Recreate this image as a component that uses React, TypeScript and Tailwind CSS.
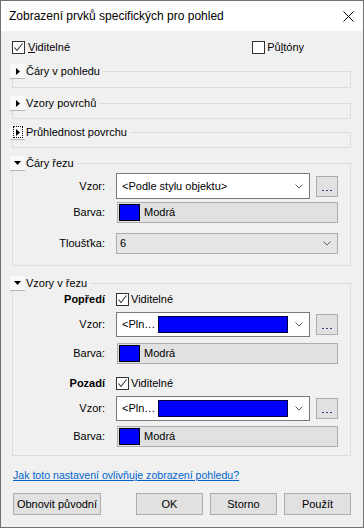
import React from "react";

const font = "font-['Liberation_Sans',Arial,sans-serif]";

function Check({ checked }: { checked?: boolean }) {
  return (
    <span className="flex h-[13px] w-[13px] shrink-0 items-center justify-center border border-[#333333] bg-white">
      {checked && (
        <svg width="11" height="11" viewBox="0 0 11 11">
          <polyline points="1.5,5.5 4,8.5 9.5,1.5" fill="none" stroke="#333333" strokeWidth="1.1" />
        </svg>
      )}
    </span>
  );
}

function Tri({ open }: { open?: boolean }) {
  return open ? (
    <svg width="7" height="4" viewBox="0 0 7 4">
      <polygon points="0,0 7,0 3.5,4" fill="#000" />
    </svg>
  ) : (
    <svg width="4" height="7" viewBox="0 0 4 7">
      <polygon points="0,0 4,3.5 0,7" fill="#000" />
    </svg>
  );
}

function Chevron() {
  return (
    <svg width="8" height="5" viewBox="0 0 8 5" className="shrink-0">
      <polyline points="0.5,0.5 4,4 7.5,0.5" fill="none" stroke="#606060" strokeWidth="1" />
    </svg>
  );
}

function Group({
  label,
  open,
  focused,
  className,
  boxClass,
  children,
}: {
  label: string;
  open?: boolean;
  focused?: boolean;
  className?: string;
  boxClass?: string;
  children?: React.ReactNode;
}) {
  return (
    <div className={`relative pt-[7px] ${className ?? ""}`}>
      <div className={`border border-[#dcdcdc] ${boxClass ?? "h-[17px]"}`}>{children}</div>
      {/* header sits over the top border like a legend */}
      <div className="absolute left-[-2px] top-0 flex h-[15px] items-center">
        <div className="flex h-[15px] w-[15px] items-center justify-center border-b border-[#b4b4b4] bg-[#f9f9f9]">
          <div
            className={`flex h-[12px] w-[10px] items-center justify-center ${
              focused ? "border border-dotted border-black" : ""
            }`}
          >
            <Tri open={open} />
          </div>
        </div>
        <span className="bg-[#f0f0f0] pl-[1px] pr-[3px] leading-[15px]">{label}</span>
      </div>
    </div>
  );
}

function Label({ children, bold }: { children: React.ReactNode; bold?: boolean }) {
  return (
    <span className={`w-[93px] shrink-0 pr-px text-right ${bold ? "font-bold" : ""}`}>{children}</span>
  );
}

function DotsButton() {
  return (
    <div className="ml-[6px] flex h-[21px] w-[22px] items-end justify-center border border-[#adadad] bg-[#e1e1e1] pb-[5px]">
      <span className="flex gap-[2px]">
        <span className="h-px w-[2px] bg-[#3a3a8a]" />
        <span className="h-px w-[2px] bg-[#3a3a8a]" />
        <span className="h-px w-[2px] bg-[#3a3a8a]" />
      </span>
    </div>
  );
}

function ColorField() {
  return (
    <div className="ml-[11px] flex h-[21px] w-[221px] items-center border border-[#adadad] bg-[#e1e1e1] pl-[1px]">
      <span className="h-[17px] w-[21px] border border-black bg-[#0000ff]" />
      <span className="pl-[4px]">Modrá</span>
    </div>
  );
}

function PatternCombo() {
  return (
    <div className="flex items-center">
      <div className="flex h-[25px] w-[194px] items-center border border-[#7a7a7a] bg-white pl-[5px] pr-[6px]">
        <span className="w-[36px]">&lt;Pln…</span>
        <span className="h-[17px] w-[130px] border border-[#000040] bg-[#0000ff]" />
        <span className="flex-1" />
        <Chevron />
      </div>
      <DotsButton />
    </div>
  );
}

export default function App() {
  return (
    <div className={`${font} flex h-[528px] w-[364px] flex-col border border-[#727272] text-[11px] text-black`}>
      {/* Title bar */}
      <div className="flex h-[30px] shrink-0 items-center justify-between bg-white pl-[8px] pr-[9px]">
        <span className="text-[12px]">Zobrazení prvků specifických pro pohled</span>
        <svg width="11" height="11" viewBox="0 0 11 11">
          <path d="M0.5 0.5 L10.5 10.5 M10.5 0.5 L0.5 10.5" stroke="#000" strokeWidth="1" />
        </svg>
      </div>

      <div className="flex flex-1 flex-col bg-[#f0f0f0] pl-[11px] pr-[12px]">
        {/* Top checkboxes */}
        <div className="mt-[10px] flex h-[13px] items-center">
          <Check checked />
          <span className="pl-[3px]">
            <span className="underline">V</span>iditelné
          </span>
          <span className="flex-1" />
          <Check />
          <span className="pl-[2px] pr-[47px]">
            Pů<span className="underline">l</span>tóny
          </span>
        </div>

        <Group label="Čáry v pohledu" className="mt-[10px]" />
        <Group label="Vzory povrchů" className="mt-[8px]" boxClass="h-[16px]" />
        <Group label="Průhlednost povrchu" focused className="mt-[6px]" boxClass="h-[16px]" />

        <Group label="Čáry řezu" open className="mt-[8px]" boxClass="h-[103px] pt-[9px]">
          <div className="flex items-center">
            <Label>Vzor:</Label>
            <div className="ml-[10px] flex items-center">
              <div className="flex h-[26px] w-[194px] items-center border border-[#7a7a7a] bg-white pl-[5px] pr-[6px]">
                <span className="flex-1">&lt;Podle stylu objektu&gt;</span>
                <Chevron />
              </div>
              <DotsButton />
            </div>
          </div>
          <div className="mt-[3px] flex items-center">
            <Label>Barva:</Label>
            <ColorField />
          </div>
          <div className="mt-[10px] flex items-center">
            <Label>Tloušťka:</Label>
            <div className="ml-[10px] flex h-[21px] w-[222px] items-center border border-[#adadad] bg-[#e5e5e5] pl-[3px] pr-[6px]">
              <span className="flex-1">6</span>
              <Chevron />
            </div>
          </div>
        </Group>

        <Group label="Vzory v řezu" open className="mt-[10px]" boxClass="h-[173px] pt-[9px]">
          <div className="flex h-[13px] items-center">
            <Label bold>Popředí</Label>
            <span className="ml-[10px]">
              <Check checked />
            </span>
            <span className="pl-[2px]">Viditelné</span>
          </div>
          <div className="mt-[6px] flex items-center">
            <Label>Vzor:</Label>
            <div className="ml-[10px]">
              <PatternCombo />
            </div>
          </div>
          <div className="mt-[6px] flex items-center">
            <Label>Barva:</Label>
            <ColorField />
          </div>
          <div className="mt-[13px] flex h-[13px] items-center">
            <Label bold>Pozadí</Label>
            <span className="ml-[10px]">
              <Check checked />
            </span>
            <span className="pl-[2px]">Viditelné</span>
          </div>
          <div className="mt-[6px] flex items-center">
            <Label>Vzor:</Label>
            <div className="ml-[10px]">
              <PatternCombo />
            </div>
          </div>
          <div className="mt-[5px] flex items-center">
            <Label>Barva:</Label>
            <ColorField />
          </div>
        </Group>

        <a className="mt-[12px] pl-px text-[10.6px] leading-[14px] text-[#0066cc] underline">
          Jak toto nastavení ovlivňuje zobrazení pohledu?
        </a>

        <div className="mt-[11px] flex items-center pl-[1px]">
          <button className="h-[22px] w-[88px] border border-[#adadad] bg-[#e1e1e1]">Obnovit původní</button>
          <span className="flex-1" />
          <div className="flex gap-[7px]">
            <button className="h-[22px] w-[67px] border border-[#adadad] bg-[#e1e1e1]">OK</button>
            <button className="h-[22px] w-[67px] border border-[#adadad] bg-[#e1e1e1]">Storno</button>
            <button className="h-[22px] w-[67px] border border-[#adadad] bg-[#e1e1e1]">Použít</button>
          </div>
        </div>
      </div>
    </div>
  );
}
